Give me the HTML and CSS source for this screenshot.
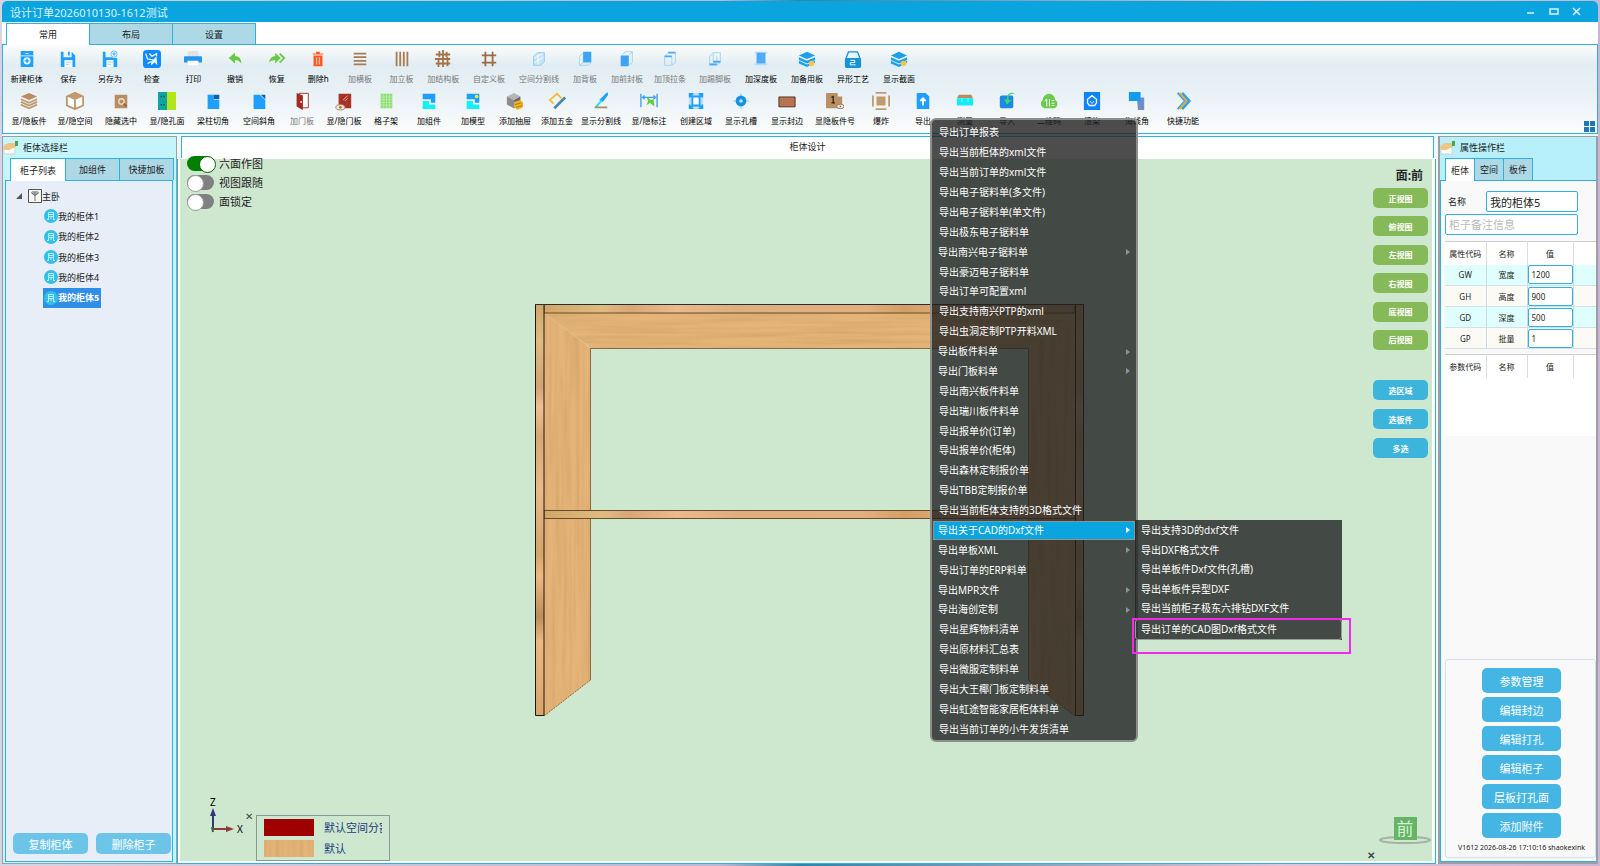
FILE: index.html
```
<!DOCTYPE html>
<html lang="zh-CN">
<head>
    <meta charset="UTF-8">
    <meta name="viewport" content="width=device-width, initial-scale=1.0">
    <title>设计订单2026010130-1612测试</title>
    <link rel="stylesheet" href="styles.css">
</head>
<body>

<!-- ICONOS -->
<svg class="sprite" aria-hidden="true">
    <symbol id="i-new" viewBox="0 0 20 20"><path fill="#1da1f9" d="M3 1h14v18H3z"/><path stroke="#dff2ff" d="M3 6.500h14M8 4h4"/><circle cx="10" cy="12" r="4" fill="#e8f6ff"/><path stroke="#1da1f9" stroke-width="1.500" d="M10 9.500v5M7.500 12h5"/></symbol>
    <symbol id="i-save" viewBox="0 0 20 20"><path fill="#1da1ff" d="M2 2h3v6h9V2l4 4v13H2z"/><path fill="#1da1ff" d="M10 2h2v4h-2z"/><path fill="#f4f8fb" d="M6 11h9v8H6z"/><path stroke="#b9cfdd" d="M7.500 13.500h6M7.500 16h4"/></symbol>
    <symbol id="i-saveas" viewBox="0 0 20 20"><path fill="#1da1ff" d="M2 2h3v6h8v1h5v10H2z"/><path fill="#f4f8fb" d="M6 11h8v8H6z"/><path stroke="#b9cfdd" d="M7.500 13.500h6M7.500 16h4"/><circle cx="14.500" cy="4.500" r="3.500" fill="#fff" stroke="#5ab8f5"/><path stroke="#1da1ff" d="M14.500 2.500v4M12.500 4.500h4"/></symbol>
    <symbol id="i-check" viewBox="0 0 20 20"><rect width="20" height="20" rx="4" fill="#0e8cff"/><path stroke="#e6f5ff" stroke-width="1.500" d="M3 4l2 6 6 1M7 4l3 3 5-3v3M5 15l4-2"/><path fill="#e6f5ff" d="M9 13l6-6 1 10-3-3-4 3z"/></symbol>
    <symbol id="i-print" viewBox="0 0 20 20"><path fill="#e3e3e3" d="M4 1h12v6H4z"/><rect y="7" width="20" height="7" rx="1" fill="#2196f3"/><path fill="#fff" d="M4 12h12v5H4z"/></symbol>
    <symbol id="i-undo" viewBox="0 0 20 20"><path fill="#68c944" d="M3 9l7-6v4c5 0 7 3 7 8-2-3-4-4-7-4v4z"/></symbol>
    <symbol id="i-redo" viewBox="0 0 20 20"><path fill="#68c944" d="M14 9L8 3v4c-4 0-6 3-7 7 2-2 4-3 7-3v4z"/><path stroke="#68c944" stroke-width="2" d="M13 4l5 5-5 5"/></symbol>
    <symbol id="i-del" viewBox="0 0 20 20"><path fill="#ff5722" d="M5 6h10v12H5zM4 4h12v1H4zM8 2h4v2H8z"/><path stroke="#ffe1d5" d="M8.500 8v8M11.500 8v8"/></symbol>
    <symbol id="i-hboard" viewBox="0 0 20 20"><path stroke="#a87c52" stroke-width="2" d="M3 4h14M3 8h14M3 12h14M3 16h14"/></symbol>
    <symbol id="i-vboard" viewBox="0 0 20 20"><path stroke="#a87c52" stroke-width="2" d="M4 2v16M8 2v16M12 2v16M16 2v16"/></symbol>
    <symbol id="i-struct" viewBox="0 0 20 20"><path stroke="#a37449" stroke-width="2" d="M2 5h16M1 10h17M2 15h16M6 1v7M10 0v9M14 2v6M5 9v10M10 11v8M15 8v10"/></symbol>
    <symbol id="i-custom" viewBox="0 0 20 20"><path stroke="#9c6b45" stroke-width="2" d="M2 6h16M2 14h16M6 2v16M14 2v16"/></symbol>
    <symbol id="i-split" viewBox="0 0 20 20"><path fill="#c3e3f8" stroke="#8ccbf5" d="M4 7l4-4h8v10l-4 4H4z"/><path stroke="#fff" d="M5 9l9-5M5 14l10-6M9 16V5"/></symbol>
    <symbol id="i-back" viewBox="0 0 20 20"><path stroke="#9fd4f7" fill="#eef7fd" d="M4 7l4-4v11l-4 3z"/><path fill="#3fa3f5" d="M8 2h9v12H8z"/><path stroke="#9fd4f7" d="M4 17h9l4-3"/></symbol>
    <symbol id="i-front" viewBox="0 0 20 20"><path fill="#3fa3f5" d="M3 6h9v12H3z"/><path stroke="#9fd4f7" d="M4 6l4-4h8v12l-4 3M12 6l4-4"/></symbol>
    <symbol id="i-top" viewBox="0 0 20 20"><path stroke="#9fd4f7" d="M4 7l4-4h8v11l-4 3H4zM12 7v10"/><path stroke="#4aaaf6" stroke-width="2" d="M4 7h8M8 3h8"/></symbol>
    <symbol id="i-kick" viewBox="0 0 20 20"><path stroke="#9fd4f7" d="M4 7l4-4h8v11l-4 3H4zM8 3v11h8M12 7v10"/><path stroke="#4aaaf6" stroke-width="2" d="M4 16h8M8 13h8"/></symbol>
    <symbol id="i-depth" viewBox="0 0 20 20"><path fill="#b5dcfb" d="M3 2h14v2H3zM3 15h14v2H3z"/><path fill="#4fabf7" d="M5 3h10v12H5z"/></symbol>
    <symbol id="i-spare" viewBox="0 0 20 20"><path fill="#1ba0ee" d="M10 2l9 4-9 4-9-4zM1 8l9 4 9-4v3l-9 4-9-4zM1 12l9 4 9-4v2l-9 5-9-4z"/><circle cx="15" cy="15" r="3" fill="#f3c846"/></symbol>
    <symbol id="i-shape" viewBox="0 0 20 20"><path fill="#e8f5fc" stroke="#1692d6" stroke-width="1.500" d="M5 2h10l3 8H2z"/><rect x="1" y="9" width="18" height="11" rx="2" fill="#1692d6"/><path stroke="#fff" d="M7 11.500h5v2.500H7v2.500h6"/></symbol>
    <symbol id="i-layers" viewBox="0 0 20 20"><path fill="#b98d5f" d="M10 1l9 4-9 4-9-4z"/><path stroke="#c19a70" stroke-width="2" d="M1 8l9 4 9-4M1 11l9 4 9-4M1 14l9 4 9-4"/></symbol>
    <symbol id="i-cube" viewBox="0 0 20 20"><path fill="#fff" stroke="#bf9568" stroke-width="2" stroke-linejoin="round" d="M1 5l9-4 9 4v10l-9 4-9-4zM10 9v10"/><path fill="#c29a6e" d="M1 5l9-4 9 4-9 4z"/></symbol>
    <symbol id="i-hide" viewBox="0 0 20 20"><path fill="#b98e62" d="M3 3h14v15H3z"/><circle cx="10.500" cy="10.500" r="3" stroke="#f0ddc5" stroke-width="1.500"/><path stroke="#8b633b" stroke-width="2" d="M13 13l3 3"/></symbol>
    <symbol id="i-hole" viewBox="0 0 20 20"><path fill="#0fa3a3" d="M0 0h10v20H0z"/><path fill="#b2e51c" d="M10 0h10v20H10z"/><path stroke="#044" stroke-width="1.500" stroke-dasharray="1.500 1.500" d="M3 5h5M3 14h5"/></symbol>
    <symbol id="i-notch" viewBox="0 0 20 20"><path fill="#1e9fff" d="M4 3h7v6h6v10H4z"/><path fill="#0a5fae" d="M11 3h6v5h-6z"/></symbol>
    <symbol id="i-bevel" viewBox="0 0 20 20"><path fill="#1e9fff" d="M4 3h7l6 6v10H4z"/><path fill="#0a5fae" d="M12 3h5v5z"/></symbol>
    <symbol id="i-door" viewBox="0 0 20 20"><path fill="#fff" stroke="#a32922" d="M7 1.500h10v16H7z"/><path fill="#a32922" d="M4 1l7 3v16l-7-4z"/><circle cx="9" cy="11" r="1" fill="#fff"/></symbol>
    <symbol id="i-seedoor" viewBox="0 0 20 20"><path fill="#a93226" d="M4 2h14v16H4z"/><path stroke="#e6b1aa" d="M9 9l5-5M11 10l3-3"/><ellipse cx="6" cy="17" rx="5" ry="3" fill="#f3e7d8" stroke="#a27c56"/><circle cx="6" cy="17" r="1.500" fill="#a27c56"/></symbol>
    <symbol id="i-lattice" viewBox="0 0 20 20"><path fill="#8fdf72" d="M4 2h13v16H4z"/><path stroke="#d7f5cc" d="M4 5.500h13M4 8.500h13M4 11.500h13M4 14.500h13M7 3v15M10.500 3v15M14 3v15" stroke-dasharray="1 1"/></symbol>
    <symbol id="i-comp" viewBox="0 0 20 20"><path fill="#1e9fff" d="M3 2h14v10h-5V8H3z"/><path fill="#12f0fa" d="M3 10h7v4h7v5H3z"/></symbol>
    <symbol id="i-model" viewBox="0 0 20 20"><path fill="#1e9fff" d="M3 2h14v10h-5V8H3z"/><path fill="#12f0fa" d="M3 10h7v4h7v5H3z"/><circle cx="14" cy="5" r="2" fill="#f7e934"/></symbol>
    <symbol id="i-drawer" viewBox="0 0 20 20"><path fill="#b5b5b5" d="M1 5l8-4 7 4-7 4z"/><path fill="#8b8b8b" d="M1 5l8 4v9l-8-4z"/><path fill="#666" d="M9 9l7-4v8l-7 5z"/><path fill="#f0b429" d="M9 11l7-2 3 3v5l-6 3-4-3z"/><path stroke="#a97408" d="M10 14l7-2M11 17l7-2"/></symbol>
    <symbol id="i-hardware" viewBox="0 0 20 20"><path stroke="#f5bd33" stroke-width="2" d="M6 13l-4-4 8-7 5 5"/><path stroke="#4b86a8" stroke-width="3" d="M7 18L19 6"/></symbol>
    <symbol id="i-line" viewBox="0 0 20 20"><path fill="#1e9fff" d="M17 0l1 3-6 8-4-2z"/><path stroke="#12e4f0" stroke-width="2" d="M11 9l-7 8"/><path stroke="#b08968" stroke-width="2" d="M3 17h14"/></symbol>
    <symbol id="i-dim" viewBox="0 0 20 20"><path stroke="#3f9fe6" stroke-width="1.500" d="M1 2v15M19 2v15M2 6h16M5 4L3 6l2 2M15 4l2 2-2 2"/><path fill="#5fcc3c" d="M7 5l5 4 3-1 1 8-5-4-4 3 2-5z"/></symbol>
    <symbol id="i-region" viewBox="0 0 20 20"><path fill="#b9dffb" d="M2 1h16v18H2z"/><path fill="#fff" stroke="#1e9fff" stroke-width="2" d="M6 5h8v10H6z"/><path stroke="#1e9fff" stroke-width="2" d="M3 6V2h4M13 2h4v4M17 14v4h-4M7 18H3v-4M3 2l3 3M17 2l-3 3M17 18l-3-3M3 18l3-3"/></symbol>
    <symbol id="i-slot" viewBox="0 0 20 20"><path stroke="#73d4f7" d="M1 10h18M10 1v18"/><circle cx="10" cy="10" r="6" fill="#1490e6"/><circle cx="10" cy="10" r="2" fill="#bde6ff"/></symbol>
    <symbol id="i-edge" viewBox="0 0 20 20"><path fill="#b87352" stroke="#4a2b1c" d="M1 5.500h18v11H1z"/></symbol>
    <symbol id="i-num" viewBox="0 0 20 20"><path fill="#b98f65" d="M0 1h13v4h5v13H0z"/><path stroke="#38260f" stroke-width="1.500" d="M6 6l2-1v7M6 12h4"/><ellipse cx="16" cy="16" rx="4" ry="2.500" fill="#eee" stroke="#96734e"/><circle cx="16" cy="16" r="1" fill="#96734e"/></symbol>
    <symbol id="i-boom" viewBox="0 0 20 20"><path fill="#c29a6f" d="M5 5h10v10H5zM4 0h12v2H4zM4 18h12v2H4zM0 4h2v12H0zM18 4h2v12h-2z"/></symbol>
    <symbol id="i-export" viewBox="0 0 20 20"><path fill="#1e9fff" d="M3 1h10l4 4v14H3z"/><path stroke="#fff" stroke-width="2" d="M10 15V8M7 10l3-3 3 3"/></symbol>
    <symbol id="i-measure" viewBox="0 0 20 20"><path fill="#b98c62" d="M3 3h14l2 4H1z"/><path fill="#12ecf5" d="M1 7h18v8H1z"/><path stroke="#8ff" d="M6.500 7v4M13.500 7v4"/></symbol>
    <symbol id="i-import" viewBox="0 0 20 20"><rect x="2" y="4" width="15" height="14" rx="2" fill="#1e88e5"/><path fill="#31dc6c" d="M18 2c-6-1-7 3-6 7h3l-5 5-3-6h3c0-6 3-8 8-7z"/></symbol>
    <symbol id="i-qr" viewBox="0 0 20 20"><path fill="#6ccb4e" d="M5 18a5 5 0 01-2-9 7 7 0 0114 0 5 5 0 01-1 9z"/><path stroke="#fff" d="M7.500 16V8L5 10M10.500 8v8M13 9.500h3M13 12.500h3M13 15h3"/></symbol>
    <symbol id="i-render" viewBox="0 0 20 20"><path fill="#0d82ff" d="M1 0h18v20H1z"/><path stroke="#fff" stroke-width="1.500" d="M10 4l5 4v4l-2 3H7l-2-3V8z"/><path stroke="#fff" d="M8 10c1 3 3 3 4 0"/></symbol>
    <symbol id="i-corner" viewBox="0 0 20 20"><path fill="#6f8fc4" d="M10 6h8v14h-7z"/><path fill="#119cf2" d="M1 0h13v10H1z"/></symbol>
    <symbol id="i-quick" viewBox="0 0 20 20"><path stroke="#2ba2f4" stroke-width="3" d="M9 1l8 9-8 9"/><path stroke="#2ba2f4" stroke-width="2" d="M4 1l8 9-8 9"/><path stroke="#f5a623" stroke-width="2" d="M6 1l8 9-8 9"/></symbol>
    <symbol id="i-hand" viewBox="0 0 16 14"><path fill="#fff" stroke="#c9d4d6" d="M1 4h11v9H1z"/><path fill="#eec584" d="M0 6l5-4h7l1 4-7 3H1z"/><path fill="#3fae49" d="M12 0h3v5h-3z"/></symbol>
    <symbol id="i-cab" viewBox="0 0 14 14"><circle cx="7" cy="7" r="7" fill="#30c0ea"/><path fill="none" stroke="#b8ecfa" d="M4.500 10V3.500h5V10M4.500 5.500h5M4.500 7.500h5M7 7.500V10M3 10.500h2M9 10.500h2"/></symbol>
</svg>

<div class="window">
    <header class="titlebar">
        <span>设计订单2026010130-1612测试</span>
        <div class="win-buttons">
            <button aria-label="最小化"><svg viewBox="0 0 8 8"><path d="M0 5h7"/></svg></button>
            <button aria-label="最大化"><svg viewBox="0 0 8 8"><path d="M0 1h8v5H0z"/></svg></button>
            <button aria-label="关闭"><svg viewBox="0 0 8 8"><path d="M0 0l7 7M7 0L0 7"/></svg></button>
        </div>
    </header>

    <nav class="main-tabs">
        <button class="active">常用</button>
        <button>布局</button>
        <button>设置</button>
    </nav>

    <!-- BARRA DE HERRAMIENTAS -->
    <div class="ribbon">
        <div class="tools">
            <div class="tools-even">
                <button class="tool"><svg><use href="#i-new"/></svg>新建柜体</button>
                <button class="tool"><svg><use href="#i-save"/></svg>保存</button>
                <button class="tool"><svg><use href="#i-saveas"/></svg>另存为</button>
                <button class="tool"><svg><use href="#i-check"/></svg>检查</button>
                <button class="tool"><svg><use href="#i-print"/></svg>打印</button>
                <button class="tool"><svg><use href="#i-undo"/></svg>撤销</button>
                <button class="tool"><svg><use href="#i-redo"/></svg>恢复</button>
                <button class="tool"><svg><use href="#i-del"/></svg>删除h</button>
                <button class="tool off"><svg><use href="#i-hboard"/></svg>加横板</button>
                <button class="tool off"><svg><use href="#i-vboard"/></svg>加立板</button>
                <button class="tool off"><svg><use href="#i-struct"/></svg>加结构板</button>
            </div>
            <button class="tool xwide off"><svg><use href="#i-custom"/></svg>自定义板</button>
            <button class="tool xwide off"><svg><use href="#i-split"/></svg>空间分割线</button>
            <button class="tool off"><svg><use href="#i-back"/></svg>加背板</button>
            <button class="tool off"><svg><use href="#i-front"/></svg>加前封板</button>
            <button class="tool mid off"><svg><use href="#i-top"/></svg>加顶拉条</button>
            <button class="tool wide off"><svg><use href="#i-kick"/></svg>加踢脚板</button>
            <button class="tool wide"><svg><use href="#i-depth"/></svg>加深度板</button>
            <button class="tool wide"><svg><use href="#i-spare"/></svg>加备用板</button>
            <button class="tool wide"><svg><use href="#i-shape"/></svg>异形工艺</button>
            <button class="tool wide"><svg><use href="#i-spare"/></svg>显示截面</button>
        </div>
        <div class="tools">
            <button class="tool wide"><svg><use href="#i-layers"/></svg>显/隐板件</button>
            <button class="tool wide"><svg><use href="#i-cube"/></svg>显/隐空间</button>
            <button class="tool wide"><svg><use href="#i-hide"/></svg>隐藏选中</button>
            <button class="tool wide"><svg><use href="#i-hole"/></svg>显/隐孔面</button>
            <button class="tool wide"><svg><use href="#i-notch"/></svg>梁柱切角</button>
            <button class="tool wide"><svg><use href="#i-bevel"/></svg>空间斜角</button>
            <button class="tool slim off"><svg><use href="#i-door"/></svg>加门板</button>
            <button class="tool mid"><svg><use href="#i-seedoor"/></svg>显/隐门板</button>
            <button class="tool slim"><svg><use href="#i-lattice"/></svg>格子架</button>
            <button class="tool wide"><svg><use href="#i-comp"/></svg>加组件</button>
            <button class="tool"><svg><use href="#i-model"/></svg>加模型</button>
            <button class="tool"><svg><use href="#i-drawer"/></svg>添加抽屉</button>
            <button class="tool"><svg><use href="#i-hardware"/></svg>添加五金</button>
            <button class="tool wide"><svg><use href="#i-line"/></svg>显示分割线</button>
            <button class="tool xwide"><svg><use href="#i-dim"/></svg>显/隐标注</button>
            <button class="tool mid"><svg><use href="#i-region"/></svg>创建区域</button>
            <button class="tool wide"><svg><use href="#i-slot"/></svg>显示孔槽</button>
            <button class="tool wide"><svg><use href="#i-edge"/></svg>显示封边</button>
            <button class="tool xwide"><svg><use href="#i-num"/></svg>显隐板件号</button>
            <button class="tool"><svg><use href="#i-boom"/></svg>爆炸</button>
            <button class="tool"><svg><use href="#i-export"/></svg>导出</button>
            <button class="tool"><svg><use href="#i-measure"/></svg>测量</button>
            <button class="tool"><svg><use href="#i-import"/></svg>导入</button>
            <button class="tool"><svg><use href="#i-qr"/></svg>二维码</button>
            <button class="tool mid"><svg><use href="#i-render"/></svg>渲染</button>
            <button class="tool wide"><svg><use href="#i-corner"/></svg>海线角</button>
            <button class="tool wide"><svg><use href="#i-quick"/></svg>快捷功能</button>
        </div>
        <button class="ribbon-grid" aria-label="布局切换"><i></i><i></i><i></i><i></i></button>
    </div>

    <div class="workspace">
        <!-- PANEL IZQUIERDO -->
        <aside class="panel left">
            <h2><svg><use href="#i-hand"/></svg>柜体选择栏</h2>
            <nav class="panel-tabs">
                <button class="active">柜子列表</button>
                <button>加组件</button>
                <button>快捷加板</button>
            </nav>
            <div class="panel-body">
                <div class="tree-root">
                    <svg class="caret" viewBox="0 0 6 6"><path d="M6 0v6H0z"/></svg>
                    <svg class="room" viewBox="0 0 14 14"><path fill="#f5f5f5" stroke="#555" d="M.5.5h13v13H.5z"/><path fill="#aaa" d="M4 2h6v3L7 7 4 5z"/><path fill="none" stroke="#777" d="M3 3.500l4 3 4-3M7 3v9"/></svg>
                    主卧
                </div>
                <ul class="tree">
                    <li><svg><use href="#i-cab"/></svg>我的柜体1</li>
                    <li><svg><use href="#i-cab"/></svg>我的柜体2</li>
                    <li><svg><use href="#i-cab"/></svg>我的柜体3</li>
                    <li><svg><use href="#i-cab"/></svg>我的柜体4</li>
                    <li class="selected"><svg><use href="#i-cab"/></svg>我的柜体5</li>
                </ul>
                <div class="left-actions">
                    <button>复制柜体</button>
                    <button>删除柜子</button>
                </div>
            </div>
        </aside>

        <!-- LIENZO -->
        <main class="design">
            <div class="design-tab">柜体设计</div>
            <div class="canvas">
                <div class="toggles">
                    <label><input type="checkbox" checked>六面作图</label>
                    <label><input type="checkbox">视图跟随</label>
                    <label><input type="checkbox">面锁定</label>
                </div>

                <svg class="cabinet" viewBox="527 300 558 420">
                    <defs>
                        <filter id="grainV" x="0" y="0" width="1" height="1">
                            <feTurbulence type="fractalNoise" baseFrequency=".25 .01" numOctaves="3" seed="4"/>
                            <feColorMatrix values="0 0 0 0 .55  0 0 0 0 .32  0 0 0 0 .12  .9 0 0 0 -.3"/>
                            <feComposite in2="SourceGraphic" operator="in" result="g"/>
                            <feMerge><feMergeNode in="SourceGraphic"/><feMergeNode in="g"/></feMerge>
                        </filter>
                        <filter id="grainH" x="0" y="0" width="1" height="1">
                            <feTurbulence type="fractalNoise" baseFrequency=".01 .25" numOctaves="3" seed="7"/>
                            <feColorMatrix values="0 0 0 0 .55  0 0 0 0 .32  0 0 0 0 .12  .9 0 0 0 -.3"/>
                            <feComposite in2="SourceGraphic" operator="in" result="g"/>
                            <feMerge><feMergeNode in="SourceGraphic"/><feMergeNode in="g"/></feMerge>
                        </filter>
                        <filter id="grainRed" x="0" y="0" width="1" height="1">
                            <feTurbulence type="fractalNoise" baseFrequency=".1 .3" numOctaves="2" seed="2"/>
                            <feColorMatrix values="0 0 0 0 .3  0 0 0 0 0  0 0 0 0 0  .9 0 0 0 -.3"/>
                            <feComposite in2="SourceGraphic" operator="in" result="g"/>
                            <feMerge><feMergeNode in="SourceGraphic"/><feMergeNode in="g"/></feMerge>
                        </filter>
                        <linearGradient id="woodH">
                            <stop offset="0" stop-color="#cfa768"/><stop offset=".11" stop-color="#dfbb80"/><stop offset=".16" stop-color="#d8a777"/><stop offset=".25" stop-color="#ebba8d"/>
                            <stop offset=".36" stop-color="#dfae7f"/><stop offset=".6" stop-color="#e2b080"/><stop offset=".68" stop-color="#d49f66"/><stop offset=".8" stop-color="#e8ae7e"/><stop offset="1" stop-color="#d9a76c"/>
                        </linearGradient>
                        <linearGradient id="woodV" x2="0" y2="1">
                            <stop offset="0" stop-color="#cfa768"/><stop offset=".09" stop-color="#dfbb80"/><stop offset=".2" stop-color="#d4a274"/><stop offset=".25" stop-color="#efc091"/><stop offset=".32" stop-color="#d8a777"/>
                            <stop offset=".45" stop-color="#e9b98a"/><stop offset=".61" stop-color="#d6a468"/><stop offset=".66" stop-color="#efb981"/><stop offset=".76" stop-color="#bf8d58"/><stop offset=".82" stop-color="#eeb981"/><stop offset="1" stop-color="#d9a46c"/>
                        </linearGradient>
                    </defs>
                    <path fill="#e5b478" filter="url(#grainH)" d="M544 313h531l-47 35H591z"/>
                    <path fill="#e5b478" filter="url(#grainV)" d="M544 313l46.500 35v332L544 716z"/>
                    <path fill="#e5b478" filter="url(#grainV)" d="M1075 313l-46.500 35v332l46.500 36z"/>
                    <path fill="none" stroke="#8a6a45" d="M590.500 680V348.500h438V680"/>
                    <path fill="none" stroke="#8a6a45" stroke-dasharray="2 1" d="M544 716l46.500-36M1075 716l-46.500-36"/>
                    <path fill="url(#woodH)" stroke="#6b4c2c" d="M544 304.500h531v8.500H544zM544 510.500h531v8H544z"/>
                    <path fill="url(#woodV)" stroke="#1c1711" d="M535.500 304.500h8.500v411h-8.500z"/>
                    <path fill="url(#woodV)" stroke="#1c1711" d="M1075.500 304.500h8v411h-8z"/>
                    <path stroke="#2c2c33" d="M535 304.500h549"/>
                </svg>

                <div class="views">
                    <strong>面:前</strong>
                    <div class="view-group">
                        <button>正视图</button>
                        <button>俯视图</button>
                        <button>左视图</button>
                        <button>右视图</button>
                        <button>底视图</button>
                        <button>后视图</button>
                    </div>
                    <div class="pick-group">
                        <button>选区域</button>
                        <button>选板件</button>
                        <button>多选</button>
                    </div>
                </div>

                <div class="corner-tools">
                    <svg class="axis" viewBox="0 0 46 34">
                        <path stroke="#35357f" stroke-width="2" d="M12 30V14"/><path fill="#35357f" d="M9 17l3-8 3 8z"/>
                        <path stroke="#8c3a3a" stroke-width="2" d="M12 30h14"/><path fill="#8c3a3a" d="M25 27l8 3-8 3z"/>
                        <path stroke="#2c6e3a" stroke-width="2" d="M11 28l1 5"/>
                        <text x="9" y="7">Z</text><text x="36" y="34">X</text>
                    </svg>
                    <button class="close-x">✕</button>
                    <div class="legend">
                        <svg class="swatch red"><rect width="100%" height="100%" filter="url(#grainRed)"/></svg><span>默认空间分割线</span>
                        <svg class="swatch wood"><rect width="100%" height="100%" filter="url(#grainV)"/></svg><span>默认</span>
                    </div>
                </div>

                <div class="cube">
                    <svg viewBox="0 0 54 8"><ellipse cx="27" cy="4" rx="25" ry="3"/></svg>
                    <b>前</b>
                </div>
                <button class="close-x bottom">✕</button>
            </div>
        </main>

        <!-- PANEL DERECHO -->
        <aside class="panel right">
            <h2><svg><use href="#i-hand"/></svg>属性操作栏</h2>
            <nav class="panel-tabs">
                <button class="active">柜体</button>
                <button>空间</button>
                <button>板件</button>
            </nav>
            <div class="panel-body">
                <div class="name-row">
                    <label for="cabName">名称</label>
                    <input id="cabName" type="text" value="我的柜体5">
                </div>
                <input class="note" type="text" placeholder="柜子备注信息" aria-label="柜子备注信息">
                <table>
                    <thead>
                        <tr><th class="c1">属性代码</th><th class="c2">名称</th><th class="c3">值</th><th></th></tr>
                    </thead>
                    <tbody>
                        <tr><td>GW</td><td>宽度</td><td><input type="text" value="1200" aria-label="宽度"></td><td></td></tr>
                        <tr><td>GH</td><td>高度</td><td><input type="text" value="900" aria-label="高度"></td><td></td></tr>
                        <tr><td>GD</td><td>深度</td><td><input type="text" value="500" aria-label="深度"></td><td></td></tr>
                        <tr><td>GP</td><td>批量</td><td><input type="text" value="1" aria-label="批量"></td><td></td></tr>
                    </tbody>
                </table>
                <div class="params">
                    <table>
                        <thead>
                            <tr><th class="c1">参数代码</th><th class="c2">名称</th><th class="c3">值</th><th></th></tr>
                        </thead>
                    </table>
                </div>
                <div class="right-actions">
                    <button>参数管理</button>
                    <button>编辑封边</button>
                    <button>编辑打孔</button>
                    <button>编辑柜子</button>
                    <button>层板打孔面</button>
                    <button>添加附件</button>
                    <small>V1612 2026-08-26 17:10:16 shaokexink</small>
                </div>
            </div>
        </aside>
    </div>
</div>

<!-- MENU EXPORTAR -->
<div class="menu">
    <button>导出订单报表</button>
    <button>导出当前柜体的xml文件</button>
    <button>导出当前订单的xml文件</button>
    <button>导出电子锯料单(多文件)</button>
    <button>导出电子锯料单(单文件)</button>
    <button>导出极东电子锯料单</button>
    <button class="sub">导出南兴电子锯料单</button>
    <button>导出豪迈电子锯料单</button>
    <button>导出订单可配置xml</button>
    <button>导出支持南兴PTP的xml</button>
    <button>导出虫洞定制PTP开料XML</button>
    <button class="sub">导出板件料单</button>
    <button class="sub">导出门板料单</button>
    <button>导出南兴板件料单</button>
    <button>导出瑞川板件料单</button>
    <button>导出报单价(订单)</button>
    <button>导出报单价(柜体)</button>
    <button>导出森林定制报价单</button>
    <button>导出TBB定制报价单</button>
    <button>导出当前柜体支持的3D格式文件</button>
    <button class="sub open">导出关于CAD的Dxf文件</button>
    <button class="sub">导出单板XML</button>
    <button>导出订单的ERP料单</button>
    <button class="sub">导出MPR文件</button>
    <button class="sub">导出海创定制</button>
    <button>导出星辉物料清单</button>
    <button>导出原材料汇总表</button>
    <button>导出微服定制料单</button>
    <button>导出大王椰门板定制料单</button>
    <button>导出虹途智能家居柜体料单</button>
    <button>导出当前订单的小牛发货清单</button>
</div>

<div class="submenu">
    <button>导出支持3D的dxf文件</button>
    <button>导出DXF格式文件</button>
    <button>导出单板件Dxf文件(孔槽)</button>
    <button>导出单板件异型DXF</button>
    <button>导出当前柜子极东六排钻DXF文件</button>
    <button class="focus">导出订单的CAD图Dxf格式文件</button>
</div>
<div class="highlight"></div>

</body>
</html>
```
FILE: styles.css
```
:root {
    --blue: #0aa4de;
    --line: #2fb0de;
    --tab: #add8e6;
    --green: #86ba58;
    --canvas: #cde8cf;
}

* { margin: 0; padding: 0; box-sizing: border-box; }

body {
    position: relative;
    height: 100vh;
    overflow: hidden;
    padding: 1px 2px 2px;
    background: linear-gradient(90deg, #d8d3e4, #bcb8d6 45%, #2f86a8 50%, #e5c3d8 80%, #c9b5d6);
    font-family: "Noto Sans", "Noto Sans CJK SC", sans-serif;
    font-size: 9px;
    color: #222;
}

button, input {
    font-family: inherit;
    font-size: inherit;
    color: inherit;
    border: 0;
    background: none;
}

button { cursor: pointer; white-space: nowrap; }
.sprite { display: none; }

.window {
    display: flex;
    flex-direction: column;
    height: 100%;
    background: #fff;
    border-radius: 5px 5px 0 0;
    overflow: hidden;
}

.titlebar {
    display: flex;
    justify-content: space-between;
    align-items: center;
    height: 21px;
    padding: 1px 17px 0 8px;
    background: var(--blue);
    color: #d9f3fd;
    font-size: 11px;
}

.win-buttons { display: flex; gap: 15px; }
.win-buttons button { width: 8px; height: 8px; }
.win-buttons svg {
    display: block;
    width: 8px;
    height: 8px;
    fill: none;
    stroke: #d9f3fd;
    stroke-width: 1.5;
    overflow: visible;
}

.main-tabs { display: flex; height: 22px; padding: 1px 0 0 4px; }
.main-tabs button {
    width: 84px;
    border: 1px solid var(--line);
    border-bottom: 0;
    margin-right: -1px;
    background: var(--tab);
}
.main-tabs .active {
    background: #fff;
    position: relative;
    z-index: 1;
    margin-bottom: -1px;
}

/* ribbon */
.ribbon {
    position: relative;
    height: 90px;
    padding: 4px 3px;
    border: 1px solid var(--line);
    background: linear-gradient(#fcfcfb, #e2edf3 22%, #e6f0f5 50%, #fafbfb 95%);
}

.tools { display: flex; height: 42px; }
.tools-even { display: flex; width: 458px; }
.tools-even .tool { flex: 1; width: auto; min-width: 0; }
.tool {
    display: flex;
    flex-direction: column;
    align-items: center;
    flex: none;
    width: 42px;
    font-size: 8px;
    line-height: 12px;
    color: #000;
    gap: 4px;
}
.tool svg { width: 18px; height: 20px; fill: none; }
.slim { width: 40px; }
.mid { width: 44px; }
.wide { width: 46px; }
.xwide { width: 50px; }
.off { color: #777; }

.ribbon-grid {
    position: absolute;
    right: 2px;
    bottom: 1px;
    display: grid;
    grid-template-columns: 5px 5px;
    grid-auto-rows: 5px;
    gap: 1px;
}
.ribbon-grid i { background: #2477b5; }

.workspace {
    flex: 1;
    min-height: 0;
    display: grid;
    grid-template-columns: 175px 1fr 160px;
    padding-top: 2px;
    background: #f1f8fb;
}

/* side panels */
.panel {
    display: flex;
    flex-direction: column;
    border: 1px solid #9a9fa3;
    background: #c4f5fc;
}
.panel.right { background: #b7f0fb; border-width: 1px 2px 2px; }
.panel h2 {
    display: flex;
    align-items: center;
    gap: 4px;
    height: 21px;
    font-size: 9px;
    font-weight: normal;
}
.panel h2 svg { width: 16px; height: 14px; }

.panel-tabs { display: flex; height: 22px; padding-left: 5px; }
.left .panel-tabs { padding-left: 7px; }
.panel-tabs button {
    width: 30px;
    border: 1px solid var(--line);
    border-bottom: 0;
    background: var(--tab);
    margin-right: -1px;
}
.left .panel-tabs button { width: 55px; }
.left .panel-tabs button:first-child { width: 56px; }
.panel-tabs .active, .left .panel-tabs .active {
    background: #fff;
    position: relative;
    z-index: 1;
    margin-bottom: -1px;
}

.panel-body {
    flex: 1;
    display: flex;
    flex-direction: column;
    border: 1px solid var(--line);
}
.left .panel-body { margin: 0 3px 1px 2px; background: #e7eef7; }
.right .panel-body { border-right: 0; background: #f9f9f9; padding: 10px 0 3px 4px; }

.tree-root {
    display: flex;
    align-items: center;
    height: 30px;
    padding-left: 10px;
}
.caret { width: 6px; height: 6px; fill: #555; }
.room { width: 14px; height: 14px; margin-left: 6px; }
.tree {
    display: flex;
    flex-direction: column;
    align-items: flex-start;
    height: 102px;
    margin-left: 37px;
    list-style: none;
    margin-top: -5px;
}
.tree li {
    flex: 1;
    display: flex;
    align-items: center;
    padding: 0 2px 0 1px;
}
.tree svg { width: 14px; height: 14px; }
.tree .selected { background: #2f8fe8; color: #fff; font-weight: bold; }

.left-actions {
    display: flex;
    gap: 8px;
    margin-top: auto;
    padding: 0 1px 7px 7px;
}
.left-actions button {
    flex: 1;
    height: 21px;
    border-radius: 5px;
    background: #6cc5e9;
    color: #fff;
    font-size: 11px;
}

/* centro */
.design {
    display: flex;
    flex-direction: column;
    margin-right: 2px;
    border-bottom: 1px solid var(--line);
}
.design-tab {
    height: 22px;
    margin: 0 2px 0 4px;
    border: 1px solid var(--line);
    border-bottom: 0;
    background: #fff;
    text-align: center;
    line-height: 20px;
}
.canvas {
    position: relative;
    flex: 1;
    display: flex;
    justify-content: center;
    align-items: center;
    border: solid #fff;
    border-width: 1px 4px 2px 3px;
    background: var(--canvas);
}
.canvas::before {
    content: "";
    position: absolute;
    inset: 0 -4px -2px -3px;
    border: solid var(--line);
    border-width: 0 1px;
    pointer-events: none;
}
.cabinet { width: 558px; height: 420px; }

.toggles {
    position: absolute;
    left: 7px;
    top: -4px;
    display: flex;
    flex-direction: column;
    gap: 3px;
}
.toggles label {
    display: flex;
    align-items: center;
    gap: 5px;
    height: 16px;
    font-size: 11px;
}
.toggles input {
    appearance: none;
    position: relative;
    width: 27px;
    height: 15px;
    border-radius: 8px;
    background: #808080;
}
.toggles input::before {
    content: "";
    position: absolute;
    left: 0;
    top: 0;
    width: 15px;
    height: 15px;
    border-radius: 50%;
    border: 1px solid #999;
    background: #fff;
}
.toggles input:checked { background: #008000; }
.toggles input:checked::before { left: 12px; border-color: #006000; }

.views {
    position: absolute;
    right: 4px;
    top: 8px;
    display: flex;
    flex-direction: column;
    align-items: flex-end;
}
.views strong { padding-right: 5px; font-size: 12px; line-height: 18px; }
.view-group, .pick-group { display: grid; }
.view-group { height: 162px; margin-top: 3px; align-content: space-between; }
.pick-group { margin-top: 30px; gap: 9px; }
.views button {
    width: 55px;
    height: 20px;
    border-radius: 5px;
    background: var(--green);
    color: #fff;
    font-size: 8px;
    font-weight: bold;
}
.pick-group button { background: #3cb4dc; }

.corner-tools {
    position: absolute;
    left: 21px;
    bottom: 0;
    display: flex;
    align-items: flex-start;
}
.axis { width: 46px; height: 34px; margin: -16px 0 0; overflow: visible; font-size: 10px; }
.close-x { width: 8px; margin: -5px 2px 0 -2px; font-size: 10px; line-height: 12px; color: #444; }
.legend {
    display: grid;
    grid-template-columns: 50px 58px;
    gap: 4px 10px;
    margin-left: 1px;
    padding: 3px 7px;
    border: 1px solid #8c9797;
    color: #1f3d7c;
    font-size: 11px;
    line-height: 17px;
}
.legend span { overflow: hidden; white-space: nowrap; }
.swatch { width: 50px; height: 17px; }
.red { fill: #a00303; }
.wood { fill: #e5b478; }

.cube {
    position: absolute;
    right: 0;
    bottom: 21px;
    width: 54px;
    display: flex;
    justify-content: center;
}
.cube b {
    position: relative;
    width: 23px;
    height: 23px;
    background: #66b466;
    color: #d6f2d4;
    font-size: 17px;
    font-weight: normal;
    line-height: 23px;
    text-align: center;
}
.cube svg {
    position: absolute;
    bottom: -4px;
    width: 54px;
    height: 8px;
    fill: none;
    stroke: #a3b3a4;
    stroke-width: 2;
}
.bottom { position: absolute; right: 55px; bottom: 0; font-weight: bold; }

/* panel derecho */
.name-row {
    display: flex;
    align-items: center;
    justify-content: space-between;
    padding: 0 18px 0 3px;
}
.name-row input, .note {
    height: 21px;
    padding: 0 3px;
    border: 1px solid var(--line);
    border-radius: 2px;
    background: #fff;
    font-size: 11px;
}
.name-row input { width: 92px; }
.note { width: 133px; margin-top: 2px; }
.note::placeholder { color: #bbb; }

table {
    width: 100%;
    margin-top: 6px;
    border-collapse: collapse;
    table-layout: fixed;
    border-top: 1px solid #ccc;
    background: #fff;
    font-size: 8px;
    text-align: center;
}
th { height: 23px; font-weight: normal; border-right: 1px solid #ddd; }
td { height: 21px; border-right: 1px solid #cfd9e3; border-bottom: 1px solid #d5dfea; }
th:last-child, td:last-child { border-right: 0; }
tbody tr:nth-child(odd) { background: #dfffff; }
tbody tr:nth-child(even) { background: #fbfaf4; }
.c1, .c2 { width: 41px; }
.c3 { width: 46px; }
td input {
    display: block;
    width: 100%;
    height: 19px;
    padding-left: 3px;
    border: 1px solid var(--line);
    border-radius: 2px;
    background: #fff;
}
.params { height: 82px; background: #fff; margin-top: 5px; }
.params table { margin-top: 0; }

.right-actions {
    display: flex;
    flex-direction: column;
    align-items: center;
    gap: 4px;
    margin: auto 0 0;
    padding: 8px 0 4px 2px;
    border: 1px solid #d3dfe8;
    border-radius: 3px;
}
.right-actions button {
    width: 79px;
    height: 25px;
    border-radius: 5px;
    background: #45b5e4;
    color: #fff;
    font-size: 11px;
}
.right-actions small { font-size: 7px; line-height: 11px; white-space: nowrap; }

/* menus */
.menu, .submenu {
    position: absolute;
    display: flex;
    flex-direction: column;
    background: rgba(32, 32, 32, 0.8);
    font-size: 10px;
    color: #fff;
}
.menu {
    left: 930px;
    top: 118px;
    width: 208px;
    height: 624px;
    padding: 3px 1px 1px;
    border: 2px solid #8d8f8d;
    border-radius: 6px;
}
.menu button, .submenu button {
    position: relative;
    flex: 1;
    display: flex;
    align-items: center;
    padding-left: 6px;
    line-height: 15px;
}
.menu .sub { padding-left: 5px; }
.sub::after {
    content: "";
    position: absolute;
    right: 5px;
    border: 3px solid transparent;
    border-left: 4px solid #8494a0;
    border-right: 0;
}
.menu .open {
    background: var(--blue);
    outline: 1px solid #8e9494;
    outline-offset: -1px;
}
.menu .open::after { border-left-color: #fff; }

.submenu {
    left: 1135px;
    top: 520px;
    width: 207px;
    height: 120px;
    padding-top: 1px;
}
.submenu .focus {
    border: 1px solid #9a9a9a;
    border-radius: 3px;
    padding-left: 5px;
}
.highlight {
    position: absolute;
    left: 1132px;
    top: 618px;
    width: 219px;
    height: 36px;
    border: 2px solid #f02ae8;
    pointer-events: none;
}
```
